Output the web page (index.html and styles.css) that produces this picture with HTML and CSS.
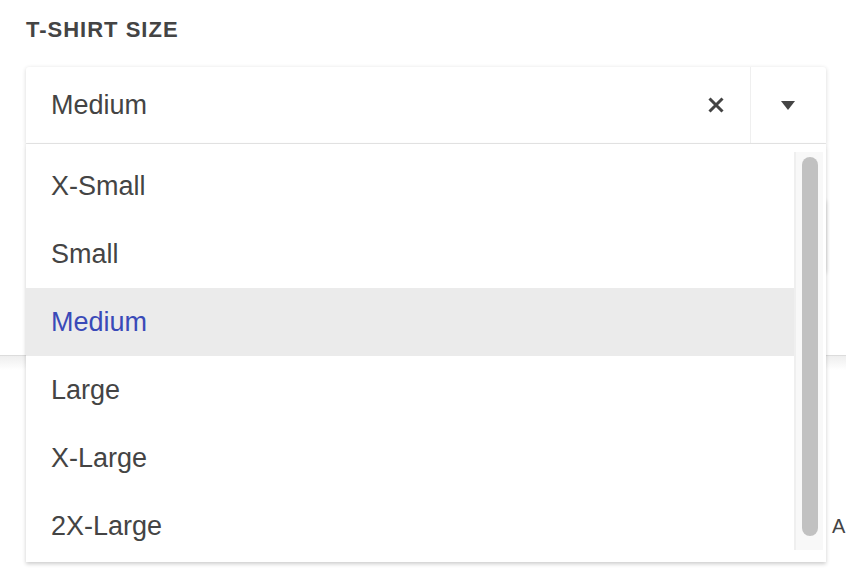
FILE: index.html
```html
<!DOCTYPE html>
<html lang="en">
<head>
<meta charset="utf-8">
<title>T-shirt size</title>
<link rel="stylesheet" href="styles.css">
</head>
<body>
<div class="page">
  <div class="label">T-SHIRT SIZE</div>
  <div class="select">
    <div class="control">
      <div class="value">Medium</div>
      <div class="clear">
        <svg width="18" height="18" viewBox="0 0 18 18"><path d="M2.5 2.5 L15.5 15.5 M15.5 2.5 L2.5 15.5" stroke="#444" stroke-width="3" fill="none"/></svg>
      </div>
      <div class="arrow">
        <svg width="16" height="10" viewBox="0 0 16 10"><path d="M1 1 L15 1 L8 10 Z" fill="#444"/></svg>
      </div>
    </div>
    <div class="menu">
      <div class="options">
        <div class="option">X-Small</div>
        <div class="option">Small</div>
        <div class="option selected">Medium</div>
        <div class="option">Large</div>
        <div class="option">X-Large</div>
        <div class="option">2X-Large</div>
      </div>
      <div class="scrollbar"><div class="thumb"></div></div>
    </div>
  </div>
  <div class="behind-box"></div>
  <div class="divider"></div>
  <div class="more">A</div>
</div>
</body>
</html>
```
FILE: styles.css
```css
html, body {
  margin: 0;
  padding: 0;
  background: #ffffff;
}
.page {
  box-sizing: border-box;
  min-height: 582px;
  padding: 18px 20px 0 26px;
  font-family: "Liberation Sans", Arial, sans-serif;
  color: #444444;
}
.label {
  font-size: 22px;
  line-height: 24px;
  font-weight: bold;
  letter-spacing: 1px;
  color: #444444;
}
.select {
  position: relative;
  margin-top: 25px;
}
.control {
  display: flex;
  align-items: stretch;
  height: 76px;
  border-bottom: 1px solid #e6e6e6;
  background: #ffffff;
  border-radius: 3px 3px 0 0;
  box-shadow: 0 1px 4px rgba(0, 0, 0, 0.16);
}
.value {
  flex: 1;
  display: flex;
  align-items: center;
  padding-left: 25px;
  font-size: 27px;
}
.clear {
  width: 68px;
  display: flex;
  align-items: center;
  justify-content: center;
}
.arrow {
  width: 74px;
  border-left: 1px solid #efefef;
  padding-right: 1px;
  display: flex;
  align-items: center;
  justify-content: center;
}
.menu {
  position: absolute;
  top: 100%;
  left: 0;
  right: 0;
  z-index: 10;
  display: flex;
  background: #ffffff;
  padding-bottom: 2px;
  box-shadow: 0 2px 4px rgba(0, 0, 0, 0.2);
}
.options {
  flex: 1;
  padding-top: 8px;
}
.option {
  height: 68px;
  display: flex;
  align-items: center;
  padding-left: 25px;
  font-size: 27px;
  color: #444444;
}
.option.selected {
  background: #ebebeb;
  color: #3a4ab8;
}
.scrollbar {
  width: 29px;
  margin: 8px 3px 10px 0;
  background: #f8f8f8;
  border-left: 2px solid #efefef;
  padding: 5px 5px 14px 6px;
  box-sizing: border-box;
  display: flex;
}
.thumb {
  flex: 1;
  background: #c1c1c1;
  border-radius: 8px;
}
.behind-box {
  margin-top: 55px;
  margin-left: auto;
  width: 300px;
  height: 74px;
  border-radius: 4px;
  background: #ffffff;
  box-shadow: 0 1px 4px rgba(0, 0, 0, 0.2);
}
.divider {
  margin: 82px -20px 0 -26px;
  height: 14px;
  border-top: 1px solid #dcdcdc;
  background: linear-gradient(#eeeeee, #ffffff);
}
.more {
  margin-top: 144px;
  margin-left: 806px;
  font-size: 20px;
  line-height: 24px;
  white-space: nowrap;
}
```
